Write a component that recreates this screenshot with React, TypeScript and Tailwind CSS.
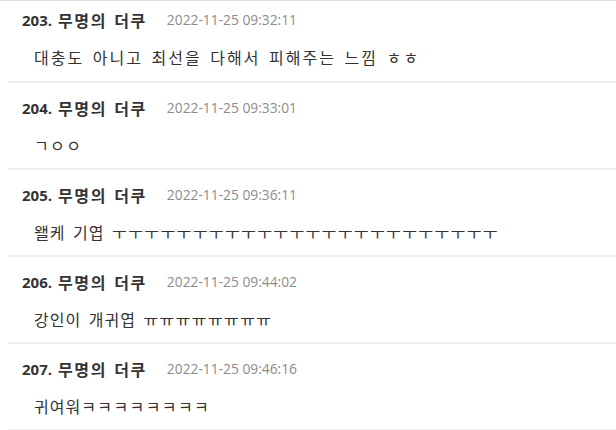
import React from "react";

const items = [
  { no: 203, time: "2022-11-25 09:32:11", text: "대충도 아니고 최선을 다해서 피해주는 느낌 ㅎㅎ", wide: true },
  { no: 204, time: "2022-11-25 09:33:01", text: "ㄱㅇㅇ", wide: false },
  { no: 205, time: "2022-11-25 09:36:11", text: "왤케 기엽 ㅜㅜㅜㅜㅜㅜㅜㅜㅜㅜㅜㅜㅜㅜㅜㅜㅜㅜㅜㅜㅜㅜㅜㅜ", wide: false },
  { no: 206, time: "2022-11-25 09:44:02", text: "강인이 개귀엽 ㅠㅠㅠㅠㅠㅠㅠㅠ", wide: false },
  { no: 207, time: "2022-11-25 09:46:16", text: "귀여워ㅋㅋㅋㅋㅋㅋㅋㅋ", wide: false },
];

function splitRuns(text: string) {
  const runs: { jamo: boolean; s: string }[] = [];
  for (const ch of text) {
    const c = ch.codePointAt(0) || 0;
    const jamo = c >= 0x3131 && c <= 0x318e;
    const last = runs[runs.length - 1];
    if (last && last.jamo === jamo) last.s += ch;
    else runs.push({ jamo, s: ch });
  }
  return runs;
}

export default function App() {
  return (
    <div
      className="w-[616px] h-[430px] overflow-hidden bg-white border-t border-[#dddddd]"
      style={{ fontFamily: '"Open Sans", "Noto Sans CJK KR", sans-serif' }}
    >
      {items.map((it, i) => (
        <div
          key={it.no}
          className={
            "ml-2 border-b-2 border-[#efefef] flex flex-col " +
            (i === 0 ? "h-[82px] pt-[8px]" : "h-[87px] pt-[14px]")
          }
        >
          <div className="h-[22px] flex items-center pl-[14px]">
            <span className="text-[15px] font-bold text-[#333]">{it.no}.</span>
            <span
              className="ml-[6px] text-[16px] font-bold text-[#333] tracking-[1.6px] [word-spacing:2px]"
              style={{ fontFamily: '"Noto Sans CJK KR", sans-serif' }}
            >
              무명의 더쿠
            </span>
            <span className="ml-[20px] text-[13.8px] text-[#8c8c8c]">{it.time}</span>
          </div>
          <div
            className="mt-[15px] h-[22px] flex items-center pl-[26px] text-[16px] text-[#333] whitespace-pre"
            style={{ fontFamily: '"Noto Sans CJK KR", sans-serif' }}
          >
            {splitRuns(it.text).map((r, k) => (
              <span
                key={k}
                className={
                  r.jamo
                    ? it.wide
                      ? "tracking-[2.4px]"
                      : "tracking-[1.4px]"
                    : it.wide
                      ? "tracking-[2px] [word-spacing:3px]"
                      : "tracking-[1px] [word-spacing:3px]"
                }
              >
                {r.s}
              </span>
            ))}
          </div>
        </div>
      ))}
    </div>
  );
}
